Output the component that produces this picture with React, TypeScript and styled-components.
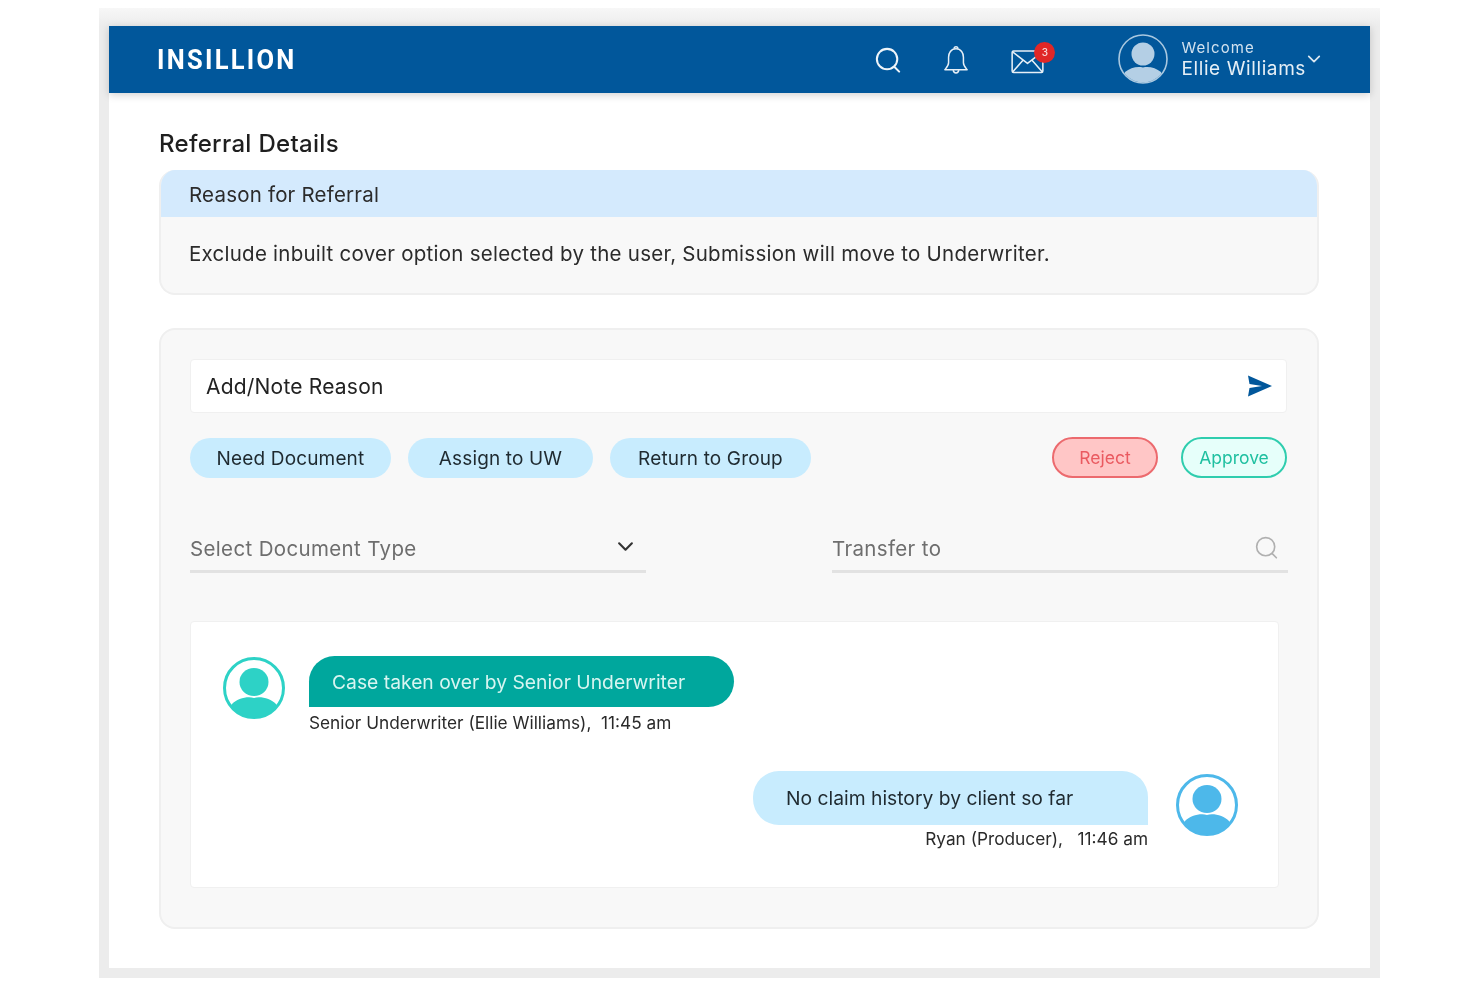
import React from 'react';
import styled, { createGlobalStyle } from 'styled-components';

const GlobalStyle = createGlobalStyle`
  html, body {
    margin: 0;
    padding: 0;
    background: #fff;
  }
  body {
    font-family: Inter, "Noto Sans", "Liberation Sans", sans-serif;
    color: #222;
  }
  * {
    box-sizing: border-box;
  }
`;

const Screen = styled.div`
  width: 1480px;
  height: 987px;
  padding: 8px 100px 9px 99px;
  filter: blur(0.5px);
`;

const Frame = styled.div`
  width: 1281px;
  height: 970px;
  padding: 18px 10px 10px;
  background: linear-gradient(180deg, #f7f7f7 0, #ececec 18px);
`;

const Page = styled.div`
  height: 942px;
  background: #fff;
`;

const Header = styled.header`
  height: 67px;
  background: #01579b;
  display: flex;
  align-items: center;
  padding: 0 49px 0 48px;
  color: #fff;
  box-shadow: 0 2px 8px rgb(0 0 0 / 18%);
`;

const Logo = styled.div`
  font-family: Roboto, sans-serif;
  font-size: 28px;
  font-weight: 700;
  letter-spacing: 2.5px;
  transform: scaleX(0.91);
  transform-origin: left center;
  margin-right: auto;
`;

const HeaderIcons = styled.div`
  display: flex;
  align-items: center;
  gap: 42px;
  margin-right: 74px;
`;

const IconWrap = styled.div`
  position: relative;
  display: flex;
  margin-top: ${(p) => p.$top || 0}px;
`;

const Badge = styled.span`
  position: absolute;
  top: -8px;
  right: -11px;
  width: 21px;
  height: 21px;
  border-radius: 50%;
  background: #e02727;
  color: #f6dcdc;
  font-size: 10px;
  font-weight: 500;
  display: flex;
  align-items: center;
  justify-content: center;
`;

const UserBlock = styled.div`
  display: flex;
  align-items: center;
  gap: 13px;
  margin-top: -2px;
`;

const UserText = styled.div`
  display: flex;
  flex-direction: column;
  margin-top: 2px;
`;

const Welcome = styled.span`
  font-size: 15px;
  line-height: 18px;
  letter-spacing: 1.05px;
  color: #d3e2ef;
`;

const UserName = styled.span`
  font-size: 19px;
  line-height: 24px;
  letter-spacing: 0.6px;
  color: #e6eff6;
`;

const Caret = styled.svg`
  align-self: flex-start;
  margin: 18px 0 0 -12px;
`;

const Body = styled.main`
  padding: 36px 51px 0 50px;
`;

const Title = styled.h1`
  margin: 0 0 11px;
  font-size: 24px;
  line-height: 30px;
  font-weight: 500;
  letter-spacing: 0.3px;
  color: #1f1f1f;
`;

const Card = styled.section`
  background: #f8f8f8;
  border: 2px solid #efefef;
  border-radius: 16px;
`;

const ReasonCard = styled(Card)`
  height: 125px;
  border-top: 0;
  overflow: hidden;
  margin-bottom: 33px;
`;

const ReasonHead = styled.div`
  height: 47px;
  margin: 0 -2px;
  padding: 1px 0 0 30px;
  background: #d4eafd;
  display: flex;
  align-items: center;
  font-size: 20.5px;
  letter-spacing: 0.2px;
  color: #2b2b2b;
`;

const ReasonText = styled.p`
  margin: 0;
  padding: 24px 28px 0;
  font-size: 20.5px;
  line-height: 26px;
  letter-spacing: 0.25px;
  color: #2b2b2b;
`;

const ActionCard = styled(Card)`
  height: 601px;
  padding: 29px 30px 0 29px;
`;

const NoteBar = styled.div`
  height: 54px;
  background: #fff;
  border: 1px solid #f0f0f0;
  border-radius: 4px;
  display: flex;
  align-items: center;
  justify-content: space-between;
  padding: 0 13px 0 15px;
  font-size: 21px;
  letter-spacing: 0.2px;
  color: #222;
`;

const ButtonRow = styled.div`
  display: flex;
  align-items: center;
  gap: 17px;
  margin-top: 24px;
`;

const Pill = styled.button`
  width: ${(p) => p.$w}px;
  height: 40px;
  border: 0;
  border-radius: 20px;
  background: #c8ecfe;
  font: inherit;
  font-size: 19px;
  letter-spacing: 0.15px;
  color: #1f2a30;
  padding: 1px 0 0;
`;

const StatusPill = styled.button`
  flex: none;
  width: 106px;
  height: 41px;
  border-radius: 21px;
  border: 2px solid ${(p) => (p.$kind === 'reject' ? '#ec6a6e' : '#2fcdae')};
  background: ${(p) => (p.$kind === 'reject' ? '#ffc6c6' : '#e6fffa')};
  color: ${(p) => (p.$kind === 'reject' ? '#ea5a60' : '#1fc0a0')};
  font: inherit;
  font-size: 17.5px;
  padding: 0;
  margin-left: ${(p) => p.$gap}px;
`;

const FieldRow = styled.div`
  display: flex;
  justify-content: space-between;
  margin: 50px -1px 0 0;
`;

const Field = styled.div`
  width: ${(p) => p.$w}px;
  height: 45px;
  border-bottom: 3px solid #e2e2e2;
  display: flex;
  align-items: center;
  justify-content: space-between;
  padding: 0 ${(p) => p.$pr}px 2px 0;
  font-size: 20.5px;
  letter-spacing: 0.35px;
  color: #6e6e6e;
`;

const FieldIcon = styled.span`
  display: flex;
  margin-top: ${(p) => p.$top}px;
`;

const ChatBox = styled.div`
  width: 1089px;
  height: 267px;
  margin-top: 48px;
  background: #fff;
  border: 1px solid #f0f0f0;
  border-radius: 4px;
  padding: 34px 40px 0 32px;
  display: flex;
  flex-direction: column;
`;

const MessageRow = styled.div`
  display: flex;
  gap: ${(p) => p.$gap}px;
  justify-content: ${(p) => (p.$mine ? 'flex-end' : 'flex-start')};
  margin-top: ${(p) => p.$top}px;
`;

const MessageColumn = styled.div`
  display: flex;
  flex-direction: column;
  align-items: ${(p) => (p.$mine ? 'flex-end' : 'flex-start')};
`;

const Bubble = styled.div`
  height: ${(p) => (p.$mine ? 54 : 51)}px;
  width: ${(p) => (p.$mine ? 395 : 425)}px;
  display: flex;
  align-items: center;
  padding-left: ${(p) => (p.$mine ? 33 : 23)}px;
  font-size: 19.3px;
  background: ${(p) => (p.$mine ? '#c8ecfe' : '#00a79d')};
  color: ${(p) => (p.$mine ? '#1f2a30' : '#d7f5f1')};
  border-radius: ${(p) => (p.$mine ? '26px 26px 0 26px' : '26px 26px 26px 0')};
`;

const Meta = styled.div`
  margin-top: ${(p) => (p.$mine ? 3 : 5)}px;
  font-size: 17.25px;
  line-height: 22px;
  color: #2a2a2a;
`;

const AvatarSlot = styled.div`
  margin-top: ${(p) => p.$top}px;
  display: flex;
`;

const Avatar = ({ color, size }: { color: string; size: number }) => (
  <svg width={size} height={size} viewBox="0 0 62 62">
    <defs>
      <clipPath id={`clip-${color.slice(1)}`}>
        <circle cx="31" cy="31" r="29" />
      </clipPath>
    </defs>
    <circle cx="31" cy="31" r="29.5" fill="#fff" stroke={color} strokeWidth="3" />
    <ellipse cx="31" cy="25" rx="14.5" ry="14" fill={color} />
    <path
      d="M4 62 L9 47 C14 42 24 39 31 41 C38 39 48 42 53 47 L58 62 Z"
      fill={color}
      clipPath={`url(#clip-${color.slice(1)})`}
    />
  </svg>
);

const HeaderAvatar = () => (
  <svg width="50" height="50" viewBox="0 0 50 50">
    <defs>
      <clipPath id="header-avatar">
        <circle cx="25" cy="25" r="23.5" />
      </clipPath>
    </defs>
    <circle cx="25" cy="25" r="24" fill="none" stroke="#a9c8e0" strokeWidth="1.6" />
    <ellipse cx="25" cy="20" rx="11.5" ry="11.5" fill="#b4cfe5" />
    <path d="M4 50 L7 38 C12 34 19 32 25 33.5 C31 32 38 34 43 38 L46 50 Z" fill="#b4cfe5" clipPath="url(#header-avatar)" />
  </svg>
);

const SearchIcon = ({ color, size, width }: { color: string; size: number; width: number }) => (
  <svg width={size} height={size} viewBox="0 0 28 28" fill="none" stroke={color} strokeWidth={width} strokeLinecap="round">
    <circle cx="13" cy="13" r="11" />
    <path d="M21 21.5 L26 26.5" />
  </svg>
);

const BellIcon = () => (
  <svg width="26" height="30" viewBox="0 0 28 32" fill="none" stroke="#e8f0f7" strokeWidth="1.6" strokeLinejoin="round">
    <path d="M14 4 C8.5 4 6 8.5 6 13 V19 C6 22 4 24 2 26.5 H26 C24 24 22 22 22 19 V13 C22 8.5 19.5 4 14 4 Z" />
    <path d="M12 4 C12 1 16 1 16 4" />
    <path d="M11 27 C11.5 31 16.5 31 17 27" />
  </svg>
);

const MailIcon = () => (
  <svg width="33" height="24" viewBox="0 0 34 25" fill="none" stroke="#e8f0f7" strokeWidth="1.6" strokeLinejoin="round">
    <rect x="1" y="1" width="32" height="22.5" rx="1.5" />
    <path d="M1.5 2 L17 14 L32.5 2" />
    <path d="M1.5 23 L12.5 10.5 M32.5 23 L21.5 10.5" />
  </svg>
);

const SendIcon = () => (
  <svg width="26" height="22" viewBox="0 0 26 22">
    <path d="M1 0.5 L25 11 L1 21.5 L2.5 13 L15 11 L2.5 9 Z" fill="#01579b" />
  </svg>
);

const ChevronIcon = ({ color, size, width }: { color: string; size: number; width: number }) => (
  <svg width={size} height={size} viewBox="0 0 16 16" fill="none" stroke={color} strokeWidth={width} strokeLinecap="round" strokeLinejoin="round">
    <path d="M2 5 L8 11 L14 5" />
  </svg>
);

const App: React.FC = () => (
  <>
    <GlobalStyle />
    <Screen>
      <Frame>
        <Page>
          <Header>
            <Logo>INSILLION</Logo>
            <HeaderIcons>
              <IconWrap>
                <SearchIcon color="#eef4f9" size={26} width={2.2} />
              </IconWrap>
              <IconWrap>
                <BellIcon />
              </IconWrap>
              <IconWrap $top={4}>
                <MailIcon />
                <Badge>3</Badge>
              </IconWrap>
            </HeaderIcons>
            <UserBlock>
              <HeaderAvatar />
              <UserText>
                <Welcome>Welcome</Welcome>
                <UserName>Ellie Williams</UserName>
              </UserText>
              <Caret width="14" height="14" viewBox="0 0 16 16" fill="none" stroke="#dbe7f1" strokeWidth="2" strokeLinecap="round" strokeLinejoin="round">
                <path d="M2 5 L8 11 L14 5" />
              </Caret>
            </UserBlock>
          </Header>
          <Body>
            <Title>Referral Details</Title>
            <ReasonCard>
              <ReasonHead>Reason for Referral</ReasonHead>
              <ReasonText>Exclude inbuilt cover option selected by the user, Submission will move to Underwriter.</ReasonText>
            </ReasonCard>
            <ActionCard>
              <NoteBar>
                Add/Note Reason
                <SendIcon />
              </NoteBar>
              <ButtonRow>
                <Pill $w={201}>Need Document</Pill>
                <Pill $w={185}>Assign to UW</Pill>
                <Pill $w={201}>Return to Group</Pill>
                <StatusPill $kind="reject" $gap={224}>Reject</StatusPill>
                <StatusPill $kind="approve" $gap={6}>Approve</StatusPill>
              </ButtonRow>
              <FieldRow>
                <Field $w={456} $pr={12}>
                  Select Document Type
                  <FieldIcon $top={-4}>
                    <ChevronIcon color="#333" size={17} width={2} />
                  </FieldIcon>
                </Field>
                <Field $w={456} $pr={10}>
                  Transfer to
                  <FieldIcon $top={-2}>
                    <SearchIcon color="#b0b0b0" size={23} width={2} />
                  </FieldIcon>
                </Field>
              </FieldRow>
              <ChatBox>
                <MessageRow $gap={24} $top={0}>
                  <AvatarSlot $top={1}>
                    <Avatar color="#2dd2c6" size={62} />
                  </AvatarSlot>
                  <MessageColumn>
                    <Bubble>Case taken over by Senior Underwriter</Bubble>
                    <Meta>Senior Underwriter (Ellie Williams),&nbsp; 11:45 am</Meta>
                  </MessageColumn>
                </MessageRow>
                <MessageRow $mine $gap={28} $top={37}>
                  <MessageColumn $mine>
                    <Bubble $mine>No claim history by client so far</Bubble>
                    <Meta $mine>Ryan (Producer),&nbsp;&nbsp; 11:46 am</Meta>
                  </MessageColumn>
                  <AvatarSlot $top={3}>
                    <Avatar color="#4db8ea" size={62} />
                  </AvatarSlot>
                </MessageRow>
              </ChatBox>
            </ActionCard>
          </Body>
        </Page>
      </Frame>
    </Screen>
  </>
);

export default App;
